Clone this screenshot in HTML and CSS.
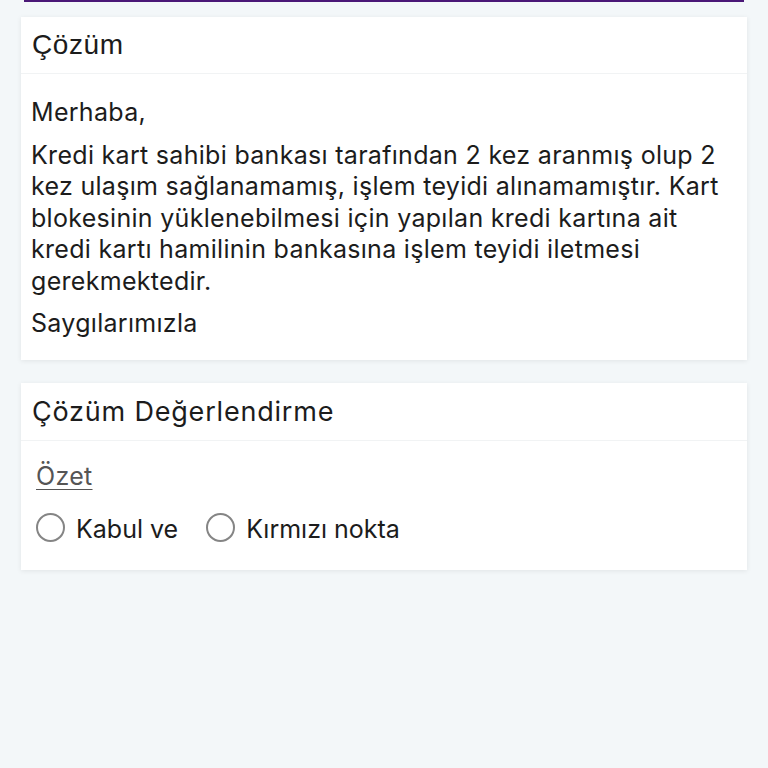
FILE: index.html
```html
<!DOCTYPE html>
<html lang="tr">
<head>
  <meta charset="UTF-8" />
  <meta name="viewport" content="width=device-width, initial-scale=1.0"/>
  <title>Çözüm</title>
  <link rel="stylesheet" href="styles.css">
</head>
<body>

<div class="top-bar"></div>

<!-- Solution card -->
<div class="card solution">
  <div class="card-header plain">Çözüm</div>
  <div class="card-body">
    <p>Merhaba,</p>
    <p>Kredi kart sahibi bankası tarafından 2 kez aranmış olup 2 kez ulaşım sağlanamamış, işlem teyidi alınamamıştır. Kart blokesinin yüklenebilmesi için yapılan kredi kartına ait kredi kartı hamilinin bankasına işlem teyidi iletmesi gerekmektedir.</p>
    <p>Saygılarımızla</p>
  </div>
</div>

<!-- Rating card -->
<div class="card rating">
  <div class="card-header">Çözüm Değerlendirme</div>
  <div class="card-body">
    <a class="summary" href="#">Özet</a>
    <div class="options">
      <label class="option"><input type="radio" name="rate"><span class="circle"></span>Kabul ve</label>
      <label class="option"><input type="radio" name="rate"><span class="circle"></span>Kırmızı nokta</label>
    </div>
  </div>
</div>

</body>
</html>
```
FILE: styles.css
```css
body {
  margin: 0;
  background: #f3f7f9;
  font-family: Inter, "Noto Sans", sans-serif;
  color: #1c1c1c;
}

.top-bar {
  height: 2px;
  margin: 0 24px;
  background: #4a1877;
}

.card {
  background: #fff;
  margin: 15px 21px 23px;
  box-shadow: 0 1px 5px rgba(0, 0, 0, 0.08);
}

.card-header {
  height: 57px;
  padding: 0 11px;
  display: flex;
  align-items: center;
  font-size: 27px;
  letter-spacing: 0.8px;
  border-bottom: 1px solid #f1f3f4;
}

.card-header.plain {
  height: 56px;
  font-family: "Liberation Sans", Arial, sans-serif;
  font-size: 28px;
  letter-spacing: 0.6px;
}

.card-body {
  padding: 23px 10px 20px;
  font-size: 25px;
  line-height: 31.5px;
  letter-spacing: 0.3px;
}

.card-body p {
  margin: 0 0 11px;
}

.card-body p:last-child {
  margin-bottom: 0;
}

.rating .card-body {
  padding: 20px 10px 24px;
}

.summary {
  display: inline-block;
  margin-left: 5px;
  color: #555;
  text-decoration: underline;
  text-decoration-thickness: 1px;
  text-underline-offset: 4px;
}

.options {
  display: flex;
  gap: 23px;
  margin-top: 22px;
  letter-spacing: 0;
}

.option {
  display: flex;
  align-items: center;
  gap: 11px;
}

.option input {
  display: none;
}

.circle {
  width: 25px;
  height: 25px;
  border: 2.5px solid #858585;
  border-radius: 50%;
  margin-left: 5px;
  margin-top: -4px;
}
```
